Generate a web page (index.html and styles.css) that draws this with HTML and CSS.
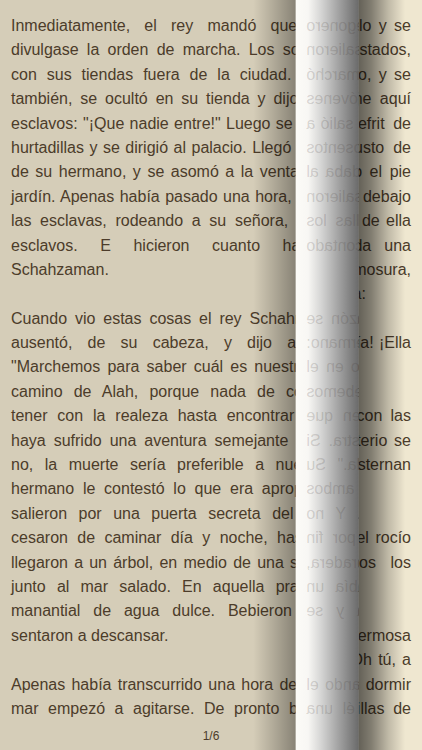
FILE: index.html
```html
<!DOCTYPE html>
<html lang="es">
<head>
    <meta charset="UTF-8">
    <meta name="viewport" content="width=device-width, initial-scale=1.0">
    <title>Las mil y una noches</title>
    <link rel="stylesheet" href="styles.css">
</head>
<body>
    <main class="book">
        <!-- page underneath -->
        <section class="sheet sheet-next" aria-hidden="true">
            <p>
                <span class="line">se levantó una columna del humo hasta el cielo y se</span>
                <span class="line">dirigió hacia la pradera. Los hermanos, asustados,</span>
                <span class="line">subieron a la punta del árbol, que era muy alto, y se</span>
                <span class="line">pusieron a mirar lo que ocurría entonces. Y he aquí</span>
                <span class="line">que la columna de humo se convirtió en un efrit de</span>
                <span class="line">gran estatura, y poderoso de hombros y robusto de</span>
                <span class="line">pecho. Llevaba un arca sobre la cabeza. Puso el pie</span>
                <span class="line">en tierra, fue hacia el árbol y se sentó debajo</span>
                <span class="line">del tronco. Abrió luego el arca y sacó una caja de ella</span>
                <span class="line">caja, la abrió, y apareció luego en seguida una</span>
                <span class="line">encantadora joven, de espléndida hermosura,</span>
                <span class="line last">que brillaba como el sol, según bien dice el poeta:</span>
            </p>
            <p>
                <span class="line">¡Antorcha en las tinieblas, aparece y ya es de día! ¡Ella</span>
                <span class="line last">aparece con la aurora!</span>
            </p>
            <p>
                <span class="line">Los soles brillan con su claridad y las lunas con las</span>
                <span class="line">sonrisas de sus ojos. Que los velos de su misterio se</span>
                <span class="line">rasgan, y al instante las criaturas se prosternan</span>
                <span class="line last">encantadas a sus pies.</span>
            </p>
            <p>
                <span class="line">Y ante el dulce relámpago de su mirada, todo el rocío</span>
                <span class="line">de las lágrimas de pasión humedece todos los</span>
                <span class="line last">párpados.</span>
            </p>
            <p>
                <span class="line">Después que el efrit hubo contemplado a la hermosa</span>
                <span class="line">joven, la miraba mucho rato, y luego le dijo: "¡Oh tú, a</span>
                <span class="line">quien robé la noche de tus bodas! Quisiera dormir</span>
                <span class="line">un momento, y con mi cabeza sobre tus rodillas de</span>
            </p>
        </section>

        <!-- page being turned -->
        <article class="sheet sheet-front" id="front">
            <p>
                <span class="line">Inmediatamente, el rey mandó que el pregonero</span>
                <span class="line">divulgase la orden de marcha. Los soldados salieron</span>
                <span class="line">con sus tiendas fuera de la ciudad. El rey marchó</span>
                <span class="line">también, se ocultó en su tienda y dijo a sus jóvenes</span>
                <span class="line">esclavos: "¡Que nadie entre!" Luego se disfrazó, salió a</span>
                <span class="line">hurtadillas y se dirigió al palacio. Llegó a los aposentos</span>
                <span class="line">de su hermano, y se asomó a la ventana que daba al</span>
                <span class="line">jardín. Apenas había pasado una hora, cuando salieron</span>
                <span class="line">las esclavas, rodeando a su señora, y tras ellas los</span>
                <span class="line">esclavos. E hicieron cuanto habían contado</span>
                <span class="line last">Schahzaman.</span>
            </p>
            <p>
                <span class="line">Cuando vio estas cosas el rey Schahriar la razón se</span>
                <span class="line">ausentó, de su cabeza, y dijo a su hermano:</span>
                <span class="line">"Marchemos para saber cuál es nuestro destino en el</span>
                <span class="line">camino de Alah, porque nada de común debemos</span>
                <span class="line">tener con la realeza hasta encontrar a alguien que</span>
                <span class="line">haya sufrido una aventura semejante que nuestra. Si</span>
                <span class="line">no, la muerte sería preferible a nuestra vida." Su</span>
                <span class="line">hermano le contestó lo que era apropiado, y ambos</span>
                <span class="line">salieron por una puerta secreta del palacio. Y no</span>
                <span class="line">cesaron de caminar día y noche, hasta que por fin</span>
                <span class="line">llegaron a un árbol, en medio de una solitaria pradera,</span>
                <span class="line">junto al mar salado. En aquella pradera había un</span>
                <span class="line">manantial de agua dulce. Bebieron de ella y se</span>
                <span class="line last">sentaron a descansar.</span>
            </p>
            <p>
                <span class="line">Apenas había transcurrido una hora de eso, cuando el</span>
                <span class="line">mar empezó a agitarse. De pronto brotó de él una</span>
            </p>
            <footer class="page-number">1/6</footer>
        </article>

        <!-- back of the turned page, filled by app.js -->
        <div class="sheet sheet-back" id="back" aria-hidden="true"></div>
    </main>
    <script src="app.js"></script>
</body>
</html>
```
FILE: styles.css
```css
* {
    box-sizing: border-box;
}

body {
    margin: 0;
    background-color: #efe7d0;
    color: #4c3c2a;
    font-family: "Liberation Sans", Arial, sans-serif;
    font-size: 16px;
    line-height: 1.525;
}

/* all sheets share one cell, --fold is where the paper bends */
.book {
    --fold: 85%;
    --curl: 15%;
    display: grid;
    min-height: 100vh;
    overflow: hidden;
}

.sheet {
    grid-area: 1 / 1;
    display: flex;
    flex-direction: column;
    min-width: 0;
    padding: 14px 11px 4px;
}

.sheet p {
    margin: 0 0 1.525em;
}

.sheet p:last-of-type {
    margin-bottom: 0;
}

.line {
    display: block;
    white-space: nowrap;
    text-align: justify;
    text-align-last: justify;
}

.line.last {
    text-align-last: left;
}

.page-number {
    margin-top: auto;
    font-size: 12px;
    line-height: 20px;
    text-align: center;
}

/* shadow cast on the next page */
.sheet-next {
    position: relative;
    background-color: #efe7d0;
}

.sheet-next::after {
    content: "";
    position: absolute;
    inset: 0;
    background: linear-gradient(to right,
        rgba(0, 0, 0, 0.58) 85%,
        rgba(0, 0, 0, 0.46) 88%,
        rgba(0, 0, 0, 0.2) 92%,
        rgba(0, 0, 0, 0) 96%);
}

/* visible part of the current page */
.sheet-front {
    position: relative;
    background-color: #d5cdb8;
    clip-path: inset(0 var(--curl) 0 0);
}

.sheet-front::after {
    content: "";
    position: absolute;
    inset: 0;
    background: linear-gradient(to right,
        rgba(0, 0, 0, 0) 60%,
        rgba(0, 0, 0, 0.14) 64%,
        rgba(0, 0, 0, 0.36) 70%);
}

/* mirrored around the fold */
.sheet-back {
    position: relative;
    background: linear-gradient(to left,
        #fcfbf7 0,
        #f8f7f4 3%,
        #d6d6d5 6%,
        #a5a5a5 10%,
        #6a6a6a 15%);
    color: rgba(60, 50, 45, 0.18);
    clip-path: inset(0 0 0 var(--fold));
    transform: scaleX(-1);
    transform-origin: var(--fold) 50%;
}
```
FILE: app.js
```js
// the back shows the same paragraphs through the paper
const front = document.getElementById('front');
const back = document.getElementById('back');

front.querySelectorAll('p').forEach(function (p) {
    back.appendChild(p.cloneNode(true));
});
```
